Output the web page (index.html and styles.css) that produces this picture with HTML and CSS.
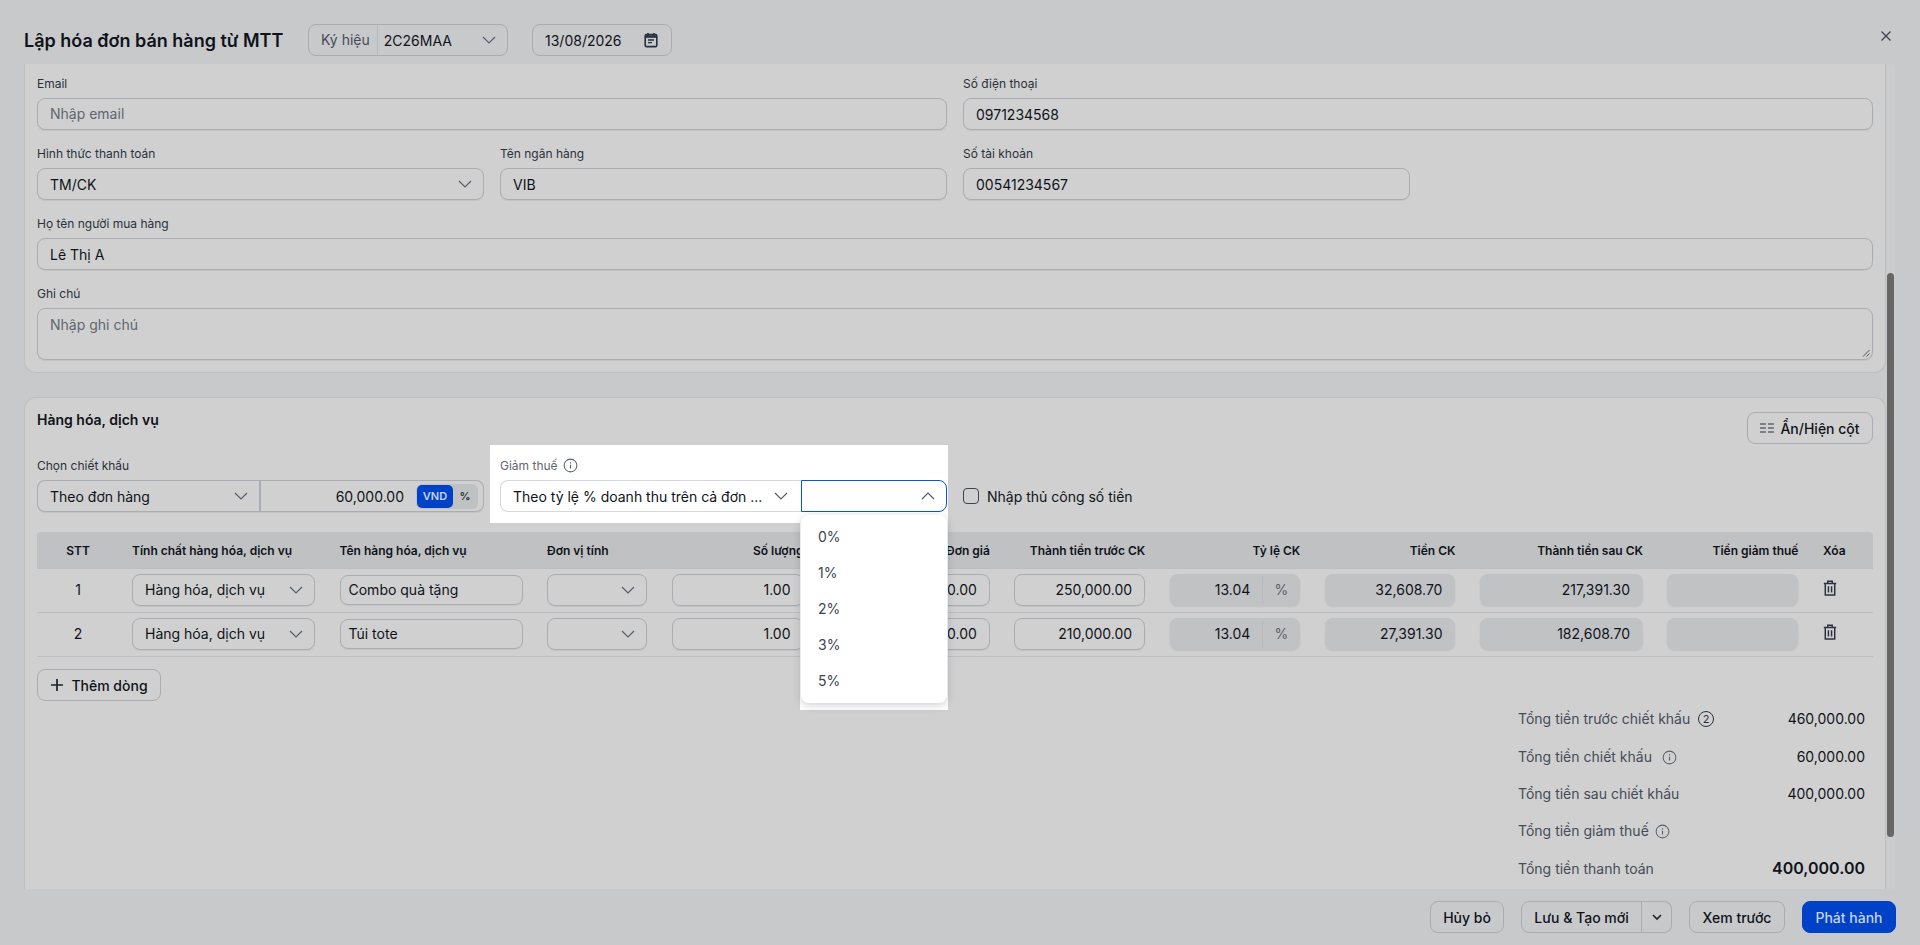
FILE: index.html
```html
<!DOCTYPE HTML>
<html lang="vi">
<head>
    <meta charset="utf-8">
    <title>Lập hóa đơn bán hàng từ MTT</title>
    <link rel="stylesheet" href="styles.css">
</head>
<body>
    <svg class="defs" width="0" height="0">
        <symbol id="chev" viewBox="0 0 16 16"><path d="M2 5l6 6 6-6" fill="none" stroke="currentColor" stroke-width="1.2"/></symbol>
        <symbol id="info" viewBox="0 0 16 16"><circle cx="8" cy="8" r="6.8" fill="none" stroke="currentColor" stroke-width="1.1"/><path d="M8 7.2v4M8 4.6v1.2" fill="none" stroke="currentColor" stroke-width="1.2"/></symbol>
        <symbol id="trash" viewBox="0 0 16 16"><path d="M2.5 4h11M6 4V2h4v2M3.8 4v10.2h8.4V4M6.6 6.5v5.5M9.4 6.5v5.5" fill="none" stroke="currentColor" stroke-width="1.3"/></symbol>
    </svg>

    <div class="modal">
        <header class="top">
            <h1>Lập hóa đơn bán hàng từ MTT</h1>
            <div class="pick symbol-pick">
                <span class="pick-label">Ký hiệu</span>
                <span class="pick-value">2C26MAA</span>
                <svg class="chev"><use href="#chev"/></svg>
            </div>
            <div class="pick date-pick">
                <span>13/08/2026</span>
                <svg class="cal" viewBox="0 0 16 16"><path d="M5 1v3M11 1v3" stroke="#26303e" stroke-width="1.6"/><rect x="2.2" y="2.6" width="11.6" height="12" rx="1.4" fill="none" stroke="#26303e" stroke-width="1.6"/><path d="M2.5 4.6h11" stroke="#26303e" stroke-width="2.4"/><path d="M5 8h6M5 10.6h4" stroke="#26303e" stroke-width="1.3"/></svg>
            </div>
            <svg class="close" viewBox="0 0 12 12"><path d="M1.5 1.5l9 9M10.5 1.5l-9 9" stroke="#3c4450" stroke-width="1.3"/></svg>
        </header>

        <div class="scroller">
            <main class="content">
                <section class="card info-card">
                    <div class="form-grid">
                        <div class="field half"><label>Email</label><div class="input placeholder">Nhập email</div></div>
                        <div class="field half"><label>Số điện thoại</label><div class="input">0971234568</div></div>
                        <div class="field"><label>Hình thức thanh toán</label><div class="input select"><span>TM/CK</span><svg class="chev"><use href="#chev"/></svg></div></div>
                        <div class="field"><label>Tên ngân hàng</label><div class="input">VIB</div></div>
                        <div class="field"><label>Số tài khoản</label><div class="input">00541234567</div></div>
                        <div class="field full"><label>Họ tên người mua hàng</label><div class="input">Lê Thị A</div></div>
                        <div class="field full"><label>Ghi chú</label>
                            <div class="input textarea placeholder">Nhập ghi chú
                                <svg class="grip" viewBox="0 0 8 8"><path d="M7.5 1L1 7.5M7.5 4.5L4.5 7.5" stroke="#555" stroke-width="1"/></svg>
                            </div>
                        </div>
                    </div>
                </section>

                <section class="card goods-card">
                    <div class="goods-head">
                        <h2>Hàng hóa, dịch vụ</h2>
                        <button class="btn cols-btn">
                            <svg class="cols" viewBox="0 0 14 12"><path d="M0 2h6M8 2h6M0 6h6M8 6h6M0 10h6M8 10h6" stroke="#2b313b" stroke-width="1"/></svg>
                            Ẩn/Hiện cột
                        </button>
                    </div>

                    <div class="tools">
                        <div class="field discount">
                            <label>Chọn chiết khấu</label>
                            <div class="joined">
                                <div class="input select disc-type"><span>Theo đơn hàng</span><svg class="chev"><use href="#chev"/></svg></div>
                                <div class="input disc-amount">
                                    <span class="amount">60,000.00</span>
                                    <span class="unit-switch"><b class="on">VND</b><b>%</b></span>
                                </div>
                            </div>
                        </div>

                        <div class="field spot">
                            <label class="spot-label">Giảm thuế <svg class="info"><use href="#info"/></svg></label>
                            <div class="joined">
                                <div class="input select tax-type"><span>Theo tỷ lệ % doanh thu trên cả đơn ...</span><svg class="chev"><use href="#chev"/></svg></div>
                                <div class="tax-rate-wrap">
                                    <div class="input select tax-rate"><span></span><svg class="chev up"><use href="#chev"/></svg></div>
                                    <div class="menu-spot">
                                        <ul class="menu">
                                            <li>0%</li>
                                            <li>1%</li>
                                            <li>2%</li>
                                            <li>3%</li>
                                            <li>5%</li>
                                        </ul>
                                    </div>
                                </div>
                            </div>
                        </div>

                        <label class="manual"><span class="check"></span>Nhập thủ công số tiền</label>
                    </div>

                    <div class="table">
                        <div class="row head">
                            <div class="c center stt">STT</div>
                            <div class="c">Tính chất hàng hóa, dịch vụ</div>
                            <div class="c">Tên hàng hóa, dịch vụ</div>
                            <div class="c">Đơn vị tính</div>
                            <div class="c right">Số lượng</div>
                            <div class="c right">Đơn giá</div>
                            <div class="c right">Thành tiền trước CK</div>
                            <div class="c right">Tỷ lệ CK</div>
                            <div class="c right">Tiền CK</div>
                            <div class="c right">Thành tiền sau CK</div>
                            <div class="c right">Tiền giảm thuế</div>
                            <div class="c last">Xóa</div>
                        </div>
                        <div class="row">
                            <div class="c center stt">1</div>
                            <div class="c"><div class="input select"><span>Hàng hóa, dịch vụ</span><svg class="chev"><use href="#chev"/></svg></div></div>
                            <div class="c"><div class="input name">Combo quà tặng</div></div>
                            <div class="c"><div class="input select"><span></span><svg class="chev"><use href="#chev"/></svg></div></div>
                            <div class="c"><div class="input num">1.00</div></div>
                            <div class="c"><div class="input num">250,000.00</div></div>
                            <div class="c"><div class="input num">250,000.00</div></div>
                            <div class="c"><div class="input off pct"><span>13.04</span><i>%</i></div></div>
                            <div class="c"><div class="input off num">32,608.70</div></div>
                            <div class="c"><div class="input off num">217,391.30</div></div>
                            <div class="c"><div class="input off"></div></div>
                            <div class="c last"><svg class="trash"><use href="#trash"/></svg></div>
                        </div>
                        <div class="row">
                            <div class="c center stt">2</div>
                            <div class="c"><div class="input select"><span>Hàng hóa, dịch vụ</span><svg class="chev"><use href="#chev"/></svg></div></div>
                            <div class="c"><div class="input name">Túi tote</div></div>
                            <div class="c"><div class="input select"><span></span><svg class="chev"><use href="#chev"/></svg></div></div>
                            <div class="c"><div class="input num">1.00</div></div>
                            <div class="c"><div class="input num">210,000.00</div></div>
                            <div class="c"><div class="input num">210,000.00</div></div>
                            <div class="c"><div class="input off pct"><span>13.04</span><i>%</i></div></div>
                            <div class="c"><div class="input off num">27,391.30</div></div>
                            <div class="c"><div class="input off num">182,608.70</div></div>
                            <div class="c"><div class="input off"></div></div>
                            <div class="c last"><svg class="trash"><use href="#trash"/></svg></div>
                        </div>
                    </div>

                    <button class="btn add-btn">
                        <svg class="plus" viewBox="0 0 14 14"><path d="M7 1v12M1 7h12" stroke="#1c222c" stroke-width="1.7"/></svg>
                        Thêm dòng
                    </button>

                    <div class="totals">
                        <div class="total"><span class="t-label">Tổng tiền trước chiết khấu <span class="badge">2</span></span><span>460,000.00</span></div>
                        <div class="total"><span class="t-label">Tổng tiền chiết khấu <svg class="info gap"><use href="#info"/></svg></span><span>60,000.00</span></div>
                        <div class="total"><span class="t-label">Tổng tiền sau chiết khấu</span><span>400,000.00</span></div>
                        <div class="total"><span class="t-label">Tổng tiền giảm thuế <svg class="info"><use href="#info"/></svg></span><span></span></div>
                        <div class="total"><span class="t-label">Tổng tiền thanh toán</span><span class="grand">400,000.00</span></div>
                    </div>
                </section>
            </main>
            <div class="track"><div class="thumb"></div></div>
        </div>

        <footer class="bottom">
            <button class="btn cancel-btn">Hủy bỏ</button>
            <div class="split">
                <button class="btn split-main">Lưu &amp; Tạo mới</button>
                <button class="btn split-more"><svg class="mini" viewBox="0 0 16 16"><path d="M4 6l4 4 4-4" fill="none" stroke="#1c222c" stroke-width="1.6"/></svg></button>
            </div>
            <button class="btn preview-btn">Xem trước</button>
            <button class="btn primary">Phát hành</button>
        </footer>
    </div>
</body>
</html>
```

FILE: styles.css
```css
* {
    box-sizing: border-box;
    margin: 0;
    padding: 0;
}
html, body {
    height: 100%;
    overflow: hidden;
}
body {
    font-family: Inter, "Noto Sans", sans-serif;
    font-size: 14px;
    color: #0f131a;
    background-color: #c8c9cb;
}
.defs {
    position: absolute;
}
.modal {
    display: flex;
    flex-direction: column;
    height: 945px;
}

/* header */
.top {
    position: relative;
    display: flex;
    align-items: center;
    height: 64px;
    flex-shrink: 0;
    padding: 16px 0 0 24px;
}
.top h1 {
    font-size: 18px;
    font-weight: 600;
    width: 284px;
    white-space: nowrap;
}
.pick {
    display: flex;
    align-items: center;
    height: 32px;
    border: 1px solid #a9acb2;
    border-radius: 8px;
    padding: 0 12px;
}
.symbol-pick {
    width: 200px;
    padding-right: 10px;
}
.pick-label {
    color: #454c58;
    padding-right: 7px;
    border-right: 1px solid #b4b6ba;
    line-height: 30px;
}
.pick-value {
    padding-left: 6px;
    flex: 1;
}
.date-pick {
    width: 140px;
    margin-left: 24px;
    justify-content: space-between;
}
.cal {
    width: 16px;
    height: 16px;
}
.close {
    position: absolute;
    right: 28px;
    top: 30px;
    width: 12px;
    height: 12px;
}
.chev {
    width: 16px;
    height: 16px;
    color: #565e6a;
    flex-shrink: 0;
}
.chev.up {
    transform: rotate(180deg);
}
.info {
    width: 15px;
    height: 15px;
    color: #5a616c;
    vertical-align: -3px;
    margin-left: 2px;
}
.info.gap {
    margin-left: 6px;
}

/* scroll area */
.scroller {
    display: flex;
    flex: 1;
    min-height: 0;
}
.content {
    width: 1862px;
    margin-left: 24px;
    overflow: hidden;
}
.track {
    width: 8px;
    margin-left: 1px;
    background-color: #cbcccd;
    border-radius: 4px 4px 0 0;
}
.thumb {
    width: 7px;
    height: 564px;
    margin-top: 209px;
    background-color: #666;
    border-radius: 4px;
}

.card {
    background-color: #d0d0d0;
    border: 1px solid #bdbec1;
    padding: 0 12px;
}
.info-card {
    height: 309px;
    border-top: 0;
    border-radius: 0 0 12px 12px;
    padding-top: 12px;
}
.goods-card {
    margin-top: 24px;
    height: 492px;
    border-bottom: 0;
    border-radius: 12px 12px 0 0;
    padding-top: 14px;
}

/* form */
.form-grid {
    display: grid;
    grid-template-columns: repeat(4, 1fr);
    gap: 16px;
}
.field.half {
    grid-column: span 2;
}
.field.full {
    grid-column: span 4;
}
.field label {
    display: block;
    font-size: 12px;
    line-height: 16px;
    color: #2b313b;
    margin-bottom: 6px;
}
.input {
    display: flex;
    align-items: center;
    height: 32px;
    padding: 0 12px;
    border: 1px solid #a9acb2;
    border-radius: 8px;
    box-shadow: 0 1px 1px rgba(0, 0, 0, .06);
    white-space: nowrap;
}
.placeholder {
    color: #5f6671;
    padding-bottom: 2px;
}
.select {
    justify-content: space-between;
    padding-right: 10px;
}
.textarea {
    position: relative;
    height: 52px;
    align-items: flex-start;
    padding-top: 7px;
}
.grip {
    position: absolute;
    right: 2px;
    bottom: 2px;
    width: 8px;
    height: 8px;
}

/* goods */
.goods-head {
    display: flex;
    justify-content: space-between;
    height: 38px;
}
.goods-head h2 {
    font-size: 14px;
    font-weight: 600;
    line-height: 16px;
}
.btn {
    display: inline-flex;
    align-items: center;
    justify-content: center;
    height: 32px;
    padding: 0 12px;
    font-family: inherit;
    font-size: 14px;
    font-weight: 500;
    color: #0f131a;
    background: transparent;
    border: 1px solid #a9acb2;
    border-radius: 8px;
}
.cols-btn {
    width: 126px;
    padding: 0;
    gap: 6px;
}
.cols {
    width: 14px;
    height: 12px;
}
.tools {
    display: flex;
    align-items: flex-end;
    height: 62px;
}
.discount {
    width: 447px;
}
.joined {
    display: flex;
}
.disc-type {
    width: 224px;
    border-radius: 8px 0 0 8px;
    border-right-width: 2px;
}
.disc-amount {
    width: 223px;
    border-left: 0;
    border-radius: 0 8px 8px 0;
    justify-content: flex-end;
    padding: 0 5px 0 0;
}
.amount {
    padding-right: 12px;
}
.unit-switch {
    display: flex;
    height: 25px;
    padding: 1px;
    background-color: #c0c1c3;
    border-radius: 6px;
}
.unit-switch b {
    width: 24px;
    font-size: 11px;
    font-weight: 600;
    line-height: 23px;
    text-align: center;
    color: #2b313b;
}
.unit-switch .on {
    width: 36px;
    color: #c5d2ea;
    background-color: #0042c7;
    border-radius: 5px;
}

/* the tour keeps this bit of the page bright */
.spot {
    align-self: flex-start;
    width: 458px;
    height: 78px;
    margin: -5px 0 0 6px;
    padding: 13px 1px 0 10px;
    background-color: #fff;
    position: relative;
    z-index: 2;
}
.spot-label {
    color: #5f6671 !important;
}
.spot .input {
    box-shadow: none;
    border-color: #d5d7db;
}
.tax-type {
    width: 301px;
    border-radius: 8px 0 0 8px;
    border-right: 0;
    padding-right: 12px;
}
.tax-rate-wrap {
    position: relative;
}
.spot .tax-rate {
    width: 146px;
    border-color: #0a52e0;
    border-radius: 0 8px 8px 0;
}
.menu-spot {
    position: absolute;
    left: -1px;
    top: 32px;
    width: 148px;
    height: 198px;
    padding: 3px 1px 0;
    background-color: #fff;
}
.menu {
    list-style: none;
    height: 188px;
    padding-top: 4px;
    background-color: #fff;
    border-radius: 8px;
    box-shadow: 0 2px 8px rgba(30, 40, 60, .22);
    color: #3c4450;
}
.menu li {
    height: 36px;
    line-height: 36px;
    padding-left: 17px;
}
.manual {
    display: flex;
    align-items: center;
    gap: 8px;
    height: 32px;
    margin: 30px 0 0 15px;
    align-self: flex-start;
    white-space: nowrap;
}
.check {
    width: 16px;
    height: 16px;
    border: 1px solid #3c4450;
    border-radius: 4px;
}

/* table */
.table {
    margin-top: 20px;
}
.row {
    display: grid;
    grid-template-columns: 95px 207.5px 207.5px 124.5px 156.5px 186.4px 155.3px 155.1px 155.2px 187.5px 155.5px 49px;
    align-items: center;
    height: 44px;
    padding-bottom: 2px;
    border-bottom: 1px solid #bdbec1;
}
.row.head {
    height: 37px;
    padding-bottom: 0;
    font-size: 12px;
    font-weight: 600;
    background-color: #c0c1c3;
    border-radius: 4px 4px 0 0;
    white-space: nowrap;
}
.c {
    padding-right: 24.5px;
    min-width: 0;
}
.right {
    text-align: right;
}
.stt {
    text-align: center;
    padding-right: 13px;
}
.c.last {
    padding-right: 0;
}
.row .select {
    padding-left: 12px;
}
.input.name {
    height: 30px;
    padding-left: 8px;
}
.input.num {
    justify-content: flex-end;
}
.input.off {
    background-color: #c1c2c4;
    border-color: transparent;
    box-shadow: 0 1px 2px rgba(0, 0, 0, .08);
}
.pct {
    padding: 0;
}
.pct span {
    flex: 1;
    text-align: right;
    padding-right: 12px;
    line-height: 26px;
    border-right: 1px solid #b8b9bc;
}
.pct i {
    width: 36px;
    font-style: normal;
    text-align: center;
    color: #5a616c;
}
.trash {
    width: 18px;
    height: 18px;
    color: #2b313b;
    display: block;
    margin: -3px 0 0 -2px;
}
.add-btn {
    width: 124px;
    padding: 0;
    gap: 7px;
    margin-top: 12px;
    display: flex;
}
.plus {
    width: 14px;
    height: 14px;
}

/* totals */
.totals {
    margin: -1px 8px 0 auto;
    width: 347px;
}
.total {
    display: flex;
    justify-content: space-between;
    align-items: center;
    height: 37.4px;
}
.t-label {
    color: #454c58;
}
.badge {
    display: inline-block;
    width: 16px;
    height: 16px;
    margin-left: 4px;
    border: 1px solid #2b313b;
    border-radius: 50%;
    font-size: 11px;
    line-height: 14px;
    text-align: center;
    color: #2b313b;
    vertical-align: 1px;
}
.grand {
    font-size: 16px;
    font-weight: 600;
}

/* footer */
.bottom {
    display: flex;
    justify-content: flex-end;
    align-items: center;
    gap: 17px;
    height: 56px;
    flex-shrink: 0;
    padding: 0 24px 0 0;
}
.cancel-btn {
    width: 74px;
    padding: 0;
}
.preview-btn {
    width: 96px;
    padding: 0;
}
.split {
    display: flex;
}
.split-main {
    width: 121px;
    padding: 0;
    border-radius: 8px 0 0 8px;
}
.split-more {
    width: 30px;
    padding: 0;
    border-left: 0;
    border-radius: 0 8px 8px 0;
}
.mini {
    width: 16px;
    height: 16px;
}
.primary {
    width: 94px;
    padding: 0;
    color: #c5d2ea;
    background-color: #0042c7;
    border-color: #0042c7;
}
```
